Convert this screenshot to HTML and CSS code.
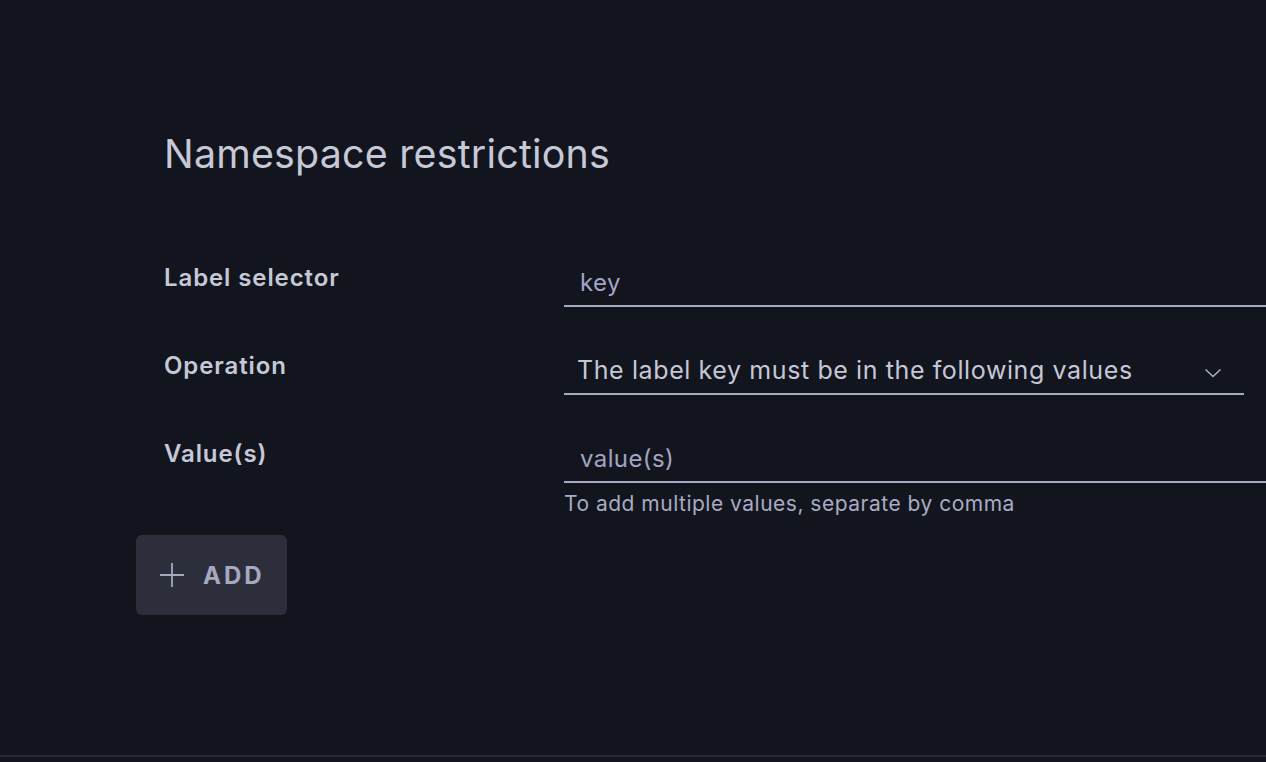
FILE: index.html
```html
<!DOCTYPE html>
<html>
<head>
<meta charset="utf-8">
<link rel="stylesheet" href="styles.css">
</head>
<body>
<div class="page">
  <section class="panel">
    <h2 class="title">Namespace restrictions</h2>
    <div class="rows">
      <div class="row">
        <div class="label">Label selector</div>
        <div class="field">
          <div class="input"><span class="placeholder">key</span></div>
        </div>
      </div>
      <div class="row">
        <div class="label">Operation</div>
        <div class="field">
          <div class="select">
            <span class="value">The label key must be in the following values</span>
            <svg class="chev" width="18" height="10" viewBox="0 0 18 10"><path d="M1.5 1.5 L9 8.5 L16.5 1.5" fill="none" stroke="#a9abc4" stroke-width="1.6"/></svg>
          </div>
        </div>
      </div>
      <div class="row">
        <div class="label">Value(s)</div>
        <div class="field">
          <div class="input"><span class="placeholder">value(s)</span></div>
          <div class="help">To add multiple values, separate by comma</div>
        </div>
      </div>
    </div>
    <button class="add">
      <svg width="26" height="26" viewBox="0 0 26 26"><path d="M13 1 V25 M1 13 H25" stroke="#a6a8c2" stroke-width="1.8" fill="none"/></svg>
      <span>ADD</span>
    </button>
  </section>
  <div class="footer-line"></div>
</div>
</body>
</html>
```
FILE: styles.css
```css
html, body {
  margin: 0;
  padding: 0;
  background: #12151d;
}
body {
  font-family: Inter, "Noto Sans", sans-serif;
  color: #c5c7d6;
  width: 1266px;
  height: 762px;
  overflow: hidden;
}
.page {
  height: 762px;
  display: flex;
  flex-direction: column;
}
.panel {
  flex: 1;
  padding: 130px 0 0 136px;
}
.title {
  margin: 0 0 0 28px;
  font-size: 39.4px;
  font-weight: 400;
  color: #c6c8d8;
  line-height: 48px;
  letter-spacing: 0.2px;
}
.rows {
  margin-top: 81px;
  padding-left: 28px;
  display: flex;
  flex-direction: column;
  gap: 40px;
}
.row {
  display: flex;
  align-items: flex-start;
}
.label {
  width: 400px;
  flex: none;
  font-size: 24px;
  font-weight: 600;
  color: #c6c8d8;
  line-height: 28px;
  letter-spacing: 0.9px;
  margin-top: 5px;
}
.field {
  flex: 1;
  margin-right: -30px;
}
.input {
  height: 48px;
  border-bottom: 2px solid #a6a7c0;
  box-sizing: border-box;
  padding: 0 16px;
  display: flex;
  align-items: center;
}
.placeholder {
  font-size: 24px;
  letter-spacing: 0.4px;
  color: #a4a3c4;
}
.select {
  height: 48px;
  margin-right: 52px;
  border-bottom: 2px solid #a6a7c0;
  box-sizing: border-box;
  padding: 0 22px 0 13px;
  display: flex;
  align-items: center;
  justify-content: space-between;
}
.select .value {
  font-size: 25px;
  letter-spacing: 0.6px;
  color: #c5c7d8;
}
.chev { margin-top: 6px; }
.help {
  margin-top: 8px;
  font-size: 21px;
  letter-spacing: 0.5px;
  color: #a9abc2;
}
.add {
  margin-top: 19px;
  width: 151px;
  height: 80px;
  border: none;
  border-radius: 6px;
  background: #2c2f3b;
  display: flex;
  align-items: center;
  gap: 18px;
  padding: 0 0 0 23px;
  font-family: inherit;
  font-size: 24px;
  font-weight: 700;
  letter-spacing: 3px;
  color: #a6a8c2;
  cursor: pointer;
}
.footer-line {
  height: 2px;
  background: #262837;
  margin-bottom: 5px;
}
```
